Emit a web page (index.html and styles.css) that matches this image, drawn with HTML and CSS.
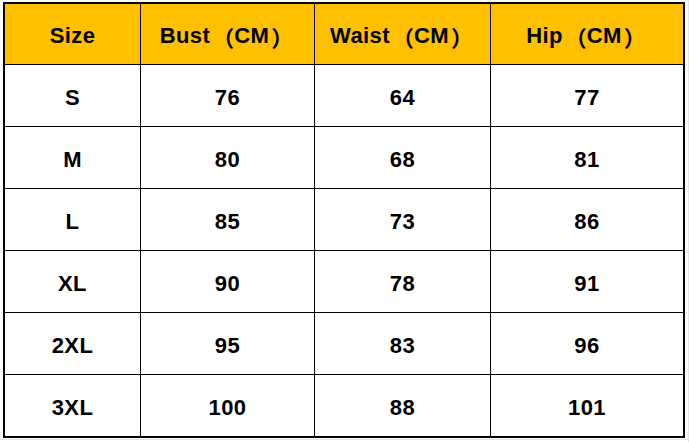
FILE: index.html
```html
<!DOCTYPE html>
<html lang="en">
<head>
<meta charset="utf-8">
<title>Size Chart</title>
<link rel="stylesheet" href="styles.css">
</head>
<body>
<div class="chart">
  <div class="cell head">Size</div>
  <div class="cell head">Bust<span class="fw open">（</span>CM<span class="fw close">）</span></div>
  <div class="cell head">Waist<span class="fw open">（</span>CM<span class="fw close">）</span></div>
  <div class="cell head">Hip<span class="fw open">（</span>CM<span class="fw close">）</span></div>

  <div class="cell">S</div><div class="cell">76</div><div class="cell">64</div><div class="cell">77</div>
  <div class="cell">M</div><div class="cell">80</div><div class="cell">68</div><div class="cell">81</div>
  <div class="cell">L</div><div class="cell">85</div><div class="cell">73</div><div class="cell">86</div>
  <div class="cell">XL</div><div class="cell">90</div><div class="cell">78</div><div class="cell">91</div>
  <div class="cell">2XL</div><div class="cell">95</div><div class="cell">83</div><div class="cell">96</div>
  <div class="cell">3XL</div><div class="cell">100</div><div class="cell">88</div><div class="cell">101</div>
</div>
</body>
</html>
```

FILE: styles.css
```css
html, body {
  margin: 0;
  padding: 0;
}

html {
  background:
    linear-gradient(#e4e4e4, #e4e4e4) 0 439px / 100% 1px no-repeat,
    linear-gradient(#e4e4e4, #e4e4e4) 688px 0 / 1px 100% no-repeat,
    #ffffff;
  height: 442px;
}

body {
  padding: 2px 0 0 3px;
  font-family: "Liberation Sans", Arial, "Noto Sans CJK SC", sans-serif;
}

.chart {
  display: grid;
  grid-template-columns: 135px 173px 175px 192px;
  grid-template-rows: 60px repeat(6, 61px);
  gap: 1px;
  width: 678px;
  background: #000000;
  border: 2px solid #000000;
}

.cell {
  display: flex;
  align-items: center;
  justify-content: center;
  padding-top: 4px;
  box-sizing: border-box;
  background: #ffffff;
  color: #000000;
  font-weight: bold;
  font-size: 22px;
  letter-spacing: 0.4px;
  white-space: nowrap;
}

.head {
  background: #ffc000;
}

.fw {
  display: inline-block;
  width: 22px;
  font-family: "Noto Sans CJK SC", sans-serif;
  font-weight: bold;
  letter-spacing: 0;
}

.fw.open {
  text-align: right;
  margin-left: 2px;
}

.fw.close {
  text-align: left;
  margin-left: 2px;
  margin-right: 2px;
}
```
